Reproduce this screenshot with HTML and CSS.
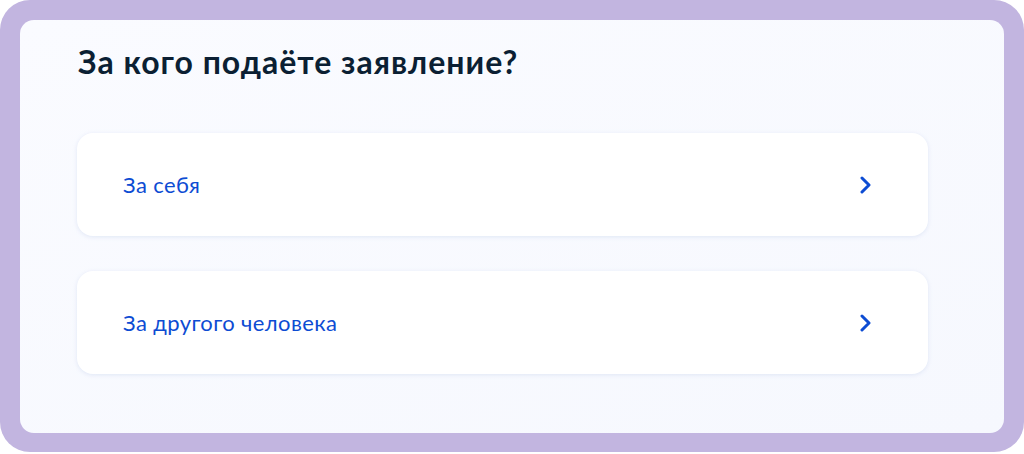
FILE: index.html
```html
<!DOCTYPE html>
<html lang="ru">
  <head>
    <meta charset="UTF-8">
    <title>За кого подаёте заявление?</title>
    <link rel="stylesheet" href="styles.css">
  </head>
  <body>
    <div class="frame">
      <div class="panel">
        <h1>За кого подаёте заявление?</h1>
        <div class="options">
          <a class="option" href="#">
            <span>За себя</span>
            <svg class="chevron" width="12" height="18" viewBox="0 0 12 18">
              <path d="M2 2l7 7-7 7" fill="none" stroke="#0d4cd3" stroke-width="3" stroke-linecap="round" stroke-linejoin="round"/>
            </svg>
          </a>
          <a class="option" href="#">
            <span>За другого человека</span>
            <svg class="chevron" width="12" height="18" viewBox="0 0 12 18">
              <path d="M2 2l7 7-7 7" fill="none" stroke="#0d4cd3" stroke-width="3" stroke-linecap="round" stroke-linejoin="round"/>
            </svg>
          </a>
        </div>
      </div>
    </div>
  </body>
</html>
```

FILE: styles.css
```css
body {
  margin: 0;
  background-color: #ffffff;
  font-family: Lato, "Noto Sans", sans-serif;
}

.frame {
  width: 1024px;
  height: 452px;
  box-sizing: border-box;
  padding: 20px 20px 19px;
  background-color: #c2b5e0;
  border-radius: 30px;
}

.panel {
  height: 100%;
  box-sizing: border-box;
  padding: 22px 76px 0 57px;
  background: linear-gradient(160deg, #fafbff 0%, #f6f8fe 100%);
  border-radius: 14px;
}

h1 {
  margin: 0;
  font-size: 32px;
  line-height: 40px;
  font-weight: 700;
  letter-spacing: 1px;
  color: #0b1f33;
  padding-left: 1px;
}

.options {
  display: flex;
  flex-direction: column;
  gap: 35px;
  margin-top: 51px;
}

.option {
  display: flex;
  align-items: center;
  justify-content: space-between;
  height: 103px;
  padding: 0 56px 0 46px;
  background-color: #ffffff;
  border-radius: 16px;
  box-shadow: 0 1px 4px rgba(209, 218, 240, 0.6);
  text-decoration: none;
  color: #0d4cd3;
  font-size: 22px;
  letter-spacing: 0.4px;
}
```
